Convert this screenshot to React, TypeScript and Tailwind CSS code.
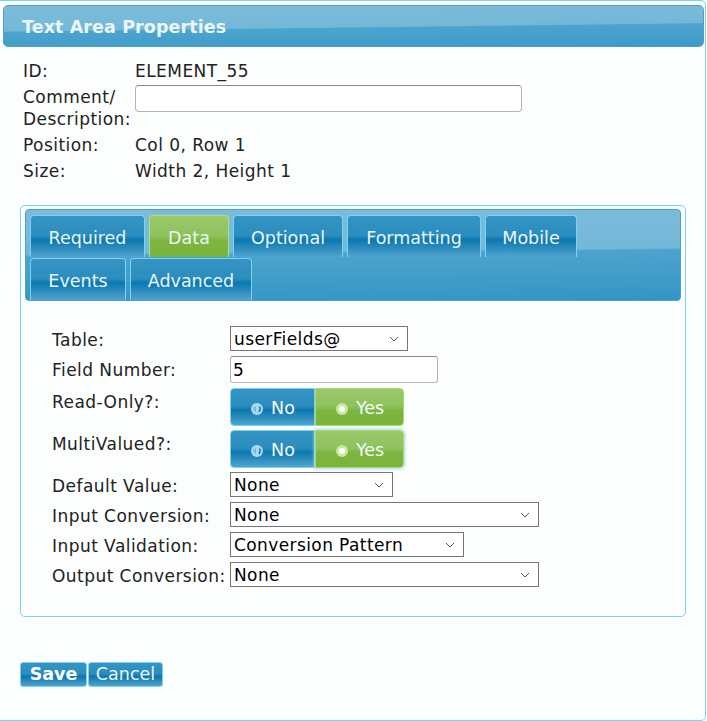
import React from "react";

const font = "font-['DejaVu_Sans',Verdana,sans-serif]";

const blueGlass =
  "bg-[linear-gradient(to_bottom,#3594c3_0%,#2b8dbe_48%,#0b77ae_58%,#2c8cbe_78%,#4fa5ce_100%)]";
const greenGlass =
  "bg-[linear-gradient(to_bottom,#9ac86a_0%,#8fc25c_48%,#7db53f_60%,#7ab43b_100%)]";
const waveHeader =
  "bg-[linear-gradient(179.3deg,#7bbcda_0%,#74b8d8_52%,#4ba4cd_54%,#3d9bca_100%)]";
const waveNav =
  "bg-[linear-gradient(179.4deg,#7bbcda_0%,#74b8d8_46%,#4ba4cd_48%,#3595c6_100%)]";

function Chevron() {
  return (
    <svg width="10" height="6" viewBox="0 0 10 6" className="shrink-0">
      <polyline points="1,1 5,5 9,1" fill="none" stroke="#555" strokeWidth="1" />
    </svg>
  );
}

function Select({ value, width }: { value: string; width: string }) {
  return (
    <div
      className={`${width} h-[25px] bg-white border border-[#767676] flex items-center justify-between pl-[3px] pr-[8px] text-[17px] tracking-[0.4px] text-black`}
    >
      <span className="pt-[3px]">{value}</span>
      <Chevron />
    </div>
  );
}

function RadioOff() {
  return (
    <svg width="14" height="14" viewBox="0 0 14 14">
      <circle cx="7" cy="7" r="6" fill="#a7d8f0" />
      <path d="M9.5 4.5 Q11 7 9 10" fill="none" stroke="#0b6ea3" strokeWidth="1.3" />
      <path d="M4 5v4M5.5 4.5v5" stroke="#5fa9d2" strokeWidth="0.8" />
    </svg>
  );
}

function RadioOn() {
  return (
    <svg width="14" height="14" viewBox="0 0 14 14">
      <circle cx="7" cy="7" r="6" fill="#c9e99b" />
      <circle cx="7" cy="7" r="3" fill="#ffffff" />
    </svg>
  );
}

function Toggle({ glow }: { glow?: boolean }) {
  return (
    <div className="flex h-[38px] text-[17.5px] text-[#f4fafc]">
      <div
        className={`w-[85px] ${blueGlass} border border-[#77d4f7] rounded-l-[4px] flex items-center justify-center gap-[7px] pt-[3px]`}
      >
        <RadioOff />
        <span>No</span>
      </div>
      <div
        className={`w-[89px] ${greenGlass} border border-[#a9dc62] rounded-r-[4px] flex items-center justify-center gap-[7px] pt-[3px] ${
          glow ? "shadow-[0_0_3px_1px_#9fd8f4]" : ""
        }`}
      >
        <RadioOn />
        <span>Yes</span>
      </div>
    </div>
  );
}

function Tab({ label, width, active }: { label: string; width: string; active?: boolean }) {
  return (
    <div
      className={`${width} h-[42px] rounded-t-[4px] border border-b-0 flex items-center justify-center pt-[3px] text-[17.5px] text-[#eaf5f7] ${
        active ? `${greenGlass} border-[#b2e07a]` : `${blueGlass} border-[#77d4f7]`
      }`}
    >
      {label}
    </div>
  );
}

function FormRow({ label, children }: { label: string; children: React.ReactNode }) {
  return (
    <div className="flex items-start">
      <div className="w-[178px] h-[25px] pt-[2px] leading-[24px] text-[17px] tracking-[0.45px] text-[#222] whitespace-nowrap">
        {label}
      </div>
      {children}
    </div>
  );
}

export default function App() {
  return (
    <div
      className={`${font} w-[706px] h-[721px] border-t border-r border-b border-[#77d4f7] rounded-tr-[5px] rounded-br-[5px] bg-[#fcfdfd] pt-[4px] pl-[3px] pr-[1px]`}
    >
      <header
        className={`h-[42px] rounded-[5px] border border-[#4f9fcb] ${waveHeader} flex items-center pl-[18px] pt-[2px] text-[17.5px] font-bold tracking-[0.1px] text-[#eaf5f7]`}
      >
        Text Area Properties
      </header>

      <div className="pl-[17px]">
        <div className="mt-[11px] pl-[3px] grid grid-cols-[112px_auto] text-[17px] tracking-[0.45px] text-[#222]">
          <div className="leading-[26px]">ID:</div>
          <div className="leading-[26px]">ELEMENT_55</div>
          <div className="leading-[22px] pt-[2px] pb-[2px]">
            Comment/
            <br />
            Description:
          </div>
          <div>
            <div className="mt-[1px] w-[387px] h-[27px] bg-white border border-[#b4b4b4] border-t-[#8a8a8a] rounded-[4px]" />
          </div>
          <div className="leading-[26px]">Position:</div>
          <div className="leading-[26px]">Col 0, Row 1</div>
          <div className="leading-[26px]">Size:</div>
          <div className="leading-[26px]">Width 2, Height 1</div>
        </div>

        <section className="mt-[21px] w-[666px] h-[412px] border border-[#77d4f7] rounded-[5px] px-[4px] pt-[3px]">
          <nav className={`h-[92px] rounded-[4px] border border-[#4f9fcb] ${waveNav} pl-[4px] pt-[5px]`}>
            <div className="flex gap-[4px]">
              <Tab label="Required" width="w-[115px]" />
              <Tab label="Data" width="w-[80px]" active />
              <Tab label="Optional" width="w-[110px]" />
              <Tab label="Formatting" width="w-[134px]" />
              <Tab label="Mobile" width="w-[92px]" />
            </div>
            <div className="flex gap-[4px] mt-[1px]">
              <Tab label="Events" width="w-[96px]" />
              <Tab label="Advanced" width="w-[122px]" />
            </div>
          </nav>

          <div className="mt-[25px] pl-[27px] flex flex-col">
            <FormRow label="Table:">
              <Select value="userFields@" width="w-[178px]" />
            </FormRow>
            <div className="mt-[5px]">
              <FormRow label="Field Number:">
                <div className="w-[208px] h-[27px] bg-white border border-[#b4b4b4] border-t-[#8a8a8a] rounded-[3px] flex items-center pl-[2px] pt-[2px] text-[17px] text-black">
                  5
                </div>
              </FormRow>
            </div>
            <div className="mt-[5px]">
              <FormRow label="Read-Only?:">
                <Toggle />
              </FormRow>
            </div>
            <div className="mt-[4px]">
              <FormRow label="MultiValued?:">
                <Toggle glow />
              </FormRow>
            </div>
            <div className="mt-[4px] flex flex-col gap-[5px]">
              <FormRow label="Default Value:">
                <Select value="None" width="w-[163px]" />
              </FormRow>
              <FormRow label="Input Conversion:">
                <Select value="None" width="w-[309px]" />
              </FormRow>
              <FormRow label="Input Validation:">
                <Select value="Conversion Pattern" width="w-[234px]" />
              </FormRow>
              <FormRow label="Output Conversion:">
                <Select value="None" width="w-[309px]" />
              </FormRow>
            </div>
          </div>
        </section>

        <div className="mt-[45px] flex gap-[1px] text-[17.5px] text-white">
          <button className={`w-[67px] h-[25px] ${blueGlass} border border-[#77d4f7] rounded-[3px] font-bold leading-none pt-[1px]`}>
            Save
          </button>
          <button className={`w-[75px] h-[25px] ${blueGlass} border border-[#77d4f7] rounded-[3px] leading-none pt-[1px] text-[#eaf5f7]`}>
            Cancel
          </button>
        </div>
      </div>
    </div>
  );
}
